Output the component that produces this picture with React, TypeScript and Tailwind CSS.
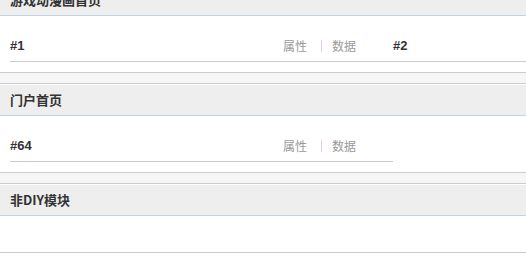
const cjk = '"Noto Sans CJK SC", "Liberation Sans", sans-serif';

type Block = { id: string };

function SectionHeader({ title }: { title: string }) {
  return (
    <div className="h-[32px] border-t border-t-white border-b border-b-[#c2d5e3] bg-[#eeeeee] pl-[10px] text-[13px] font-bold leading-[30px] text-[#333]">
      {title}
    </div>
  );
}

function FrameBlock({ block }: { block: Block }) {
  return (
    <div className="flex h-[46px] w-[383px] shrink-0 items-start justify-between border-b border-[#cccccc] pt-[22px]">
      <span className="font-['Liberation_Sans',sans-serif] text-[13px] font-bold leading-[15px] text-[#333]">
        {block.id}
      </span>
      <div className="mr-[37px] flex items-center text-[12px] leading-[15px] text-[#999]">
        <span>属性</span>
        <span className="ml-[14px] mr-[10px] h-[12px] w-px bg-[#dccfdc]" />
        <span>数据</span>
      </div>
    </div>
  );
}

function Section({ title, blocks }: { title: string; blocks: Block[] }) {
  return (
    <div>
      <SectionHeader title={title} />
      {blocks.length > 0 ? (
        <div className="flex overflow-hidden border-b border-[#cccccc] bg-white px-[10px] pb-[10px]">
          {blocks.map((b) => (
            <FrameBlock key={b.id} block={b} />
          ))}
        </div>
      ) : (
        <div className="h-[37px] border-b border-[#cccccc] bg-white" />
      )}
    </div>
  );
}

function Gap() {
  return <div className="h-[11px] border-b border-[#cccccc] bg-[#f6f6f6]" />;
}

export default function App() {
  return (
    <div className="h-[259px] w-[526px] overflow-hidden bg-white" style={{ fontFamily: cjk }}>
      <div className="-mt-[16px]">
        <Section title="游戏动漫画首页" blocks={[{ id: "#1" }, { id: "#2" }]} />
        <Gap />
        <Section title="门户首页" blocks={[{ id: "#64" }]} />
        <Gap />
        <Section title="非DIY模块" blocks={[]} />
      </div>
    </div>
  );
}
